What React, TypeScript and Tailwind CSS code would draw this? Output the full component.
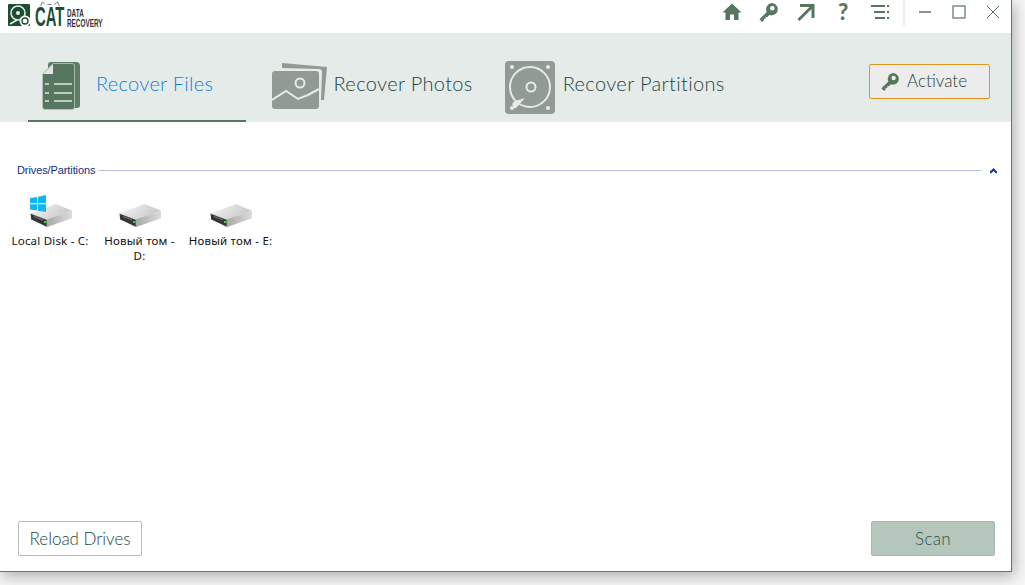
const G = "#57765f";

function Key({ className }: { className?: string }) {
  return (
    <svg viewBox="0 0 20 20" className={className} fill="#57765f">
      <path fillRule="evenodd" d="M12.6 1a6.200 6.200 0 0 1 0 12.400 6.200 6.200 0 0 1-2.200-.4L8.400 15H6.600v1.800H4.800v1.700L3.300 20 .5 17.200l7.300-7.300A6.200 6.200 0 0 1 12.600 1Zm.7 3a2.300 2.300 0 1 0 0 4.600 2.300 2.300 0 0 0 0-4.600Z" />
    </svg>
  );
}

function Drive({ win }: { win?: boolean }) {
  return (
    <svg viewBox="0 0 48 33" className="w-[48px] h-[33px] ml-[1px]">
      <defs>
        <linearGradient id="dtop" x1="0" y1="0" x2="1" y2="0.400">
          <stop offset="0" stopColor="#fafafa" />
          <stop offset="1" stopColor="#c8c8c8" />
        </linearGradient>
        <linearGradient id="dside" x1="0" y1="0" x2="1" y2="0">
          <stop offset="0" stopColor="#a8a8a8" />
          <stop offset="1" stopColor="#dcdcdc" />
        </linearGradient>
      </defs>
      <path d="M3.300 18.300 L29 9 L45 15.700 L19.700 24.300 Z" fill="url(#dtop)" />
      <path d="M19.700 24.300 L45 15.700 V23.300 L19.700 32.300 Z" fill="url(#dside)" />
      <path d="M3.300 18.300 L19.700 24.300 V32.300 L4 23.500 Z" fill="#a5a5a5" />
      <path d="M3.800 19 L19.700 25 V31.500 L4.200 24.500 Z" fill="#353535" />
      <path d="M7 21.500 L16 25" stroke="#8a8a8a" strokeWidth="0.800" />
      <rect x="17" y="26" width="2.500" height="2" fill="#32d24a" />
      {win && (
        <g fill="#12b5ee">
          <path d="M3 3 L10 2 V8.200 H3 Z" />
          <path d="M11 1.800 L19 0 V8.200 H11 Z" />
          <path d="M3 9.300 H10 V15.500 L3 14.500 Z" />
          <path d="M11 9.300 H19 V17 L11 15.700 Z" />
        </g>
      )}
    </svg>
  );
}

function DriveItem({ lines, win, w }: { lines: string[]; win?: boolean; w: string }) {
  return (
    <div className={`flex flex-col items-center ${w}`}>
      <Drive win={win} />
      <div className="font-['Noto_Sans',sans-serif] text-[11.5px] tracking-[0.2px] leading-[15px] text-center text-[#111] mt-[5px] whitespace-nowrap">
        {lines.map((l) => (
          <div key={l}>{l}</div>
        ))}
      </div>
    </div>
  );
}

export default function App() {
  return (
    <div className="w-[1025px] h-[585px] bg-[#f6f6f6] overflow-hidden font-['Lato',sans-serif]">
      <div className="w-[1012px] h-[572px] bg-white border-r border-b border-[#6f6f6f] flex flex-col shadow-[2px_4px_14px_rgba(0,0,0,0.3)]">
        <div className="h-[33px] flex justify-between shrink-0">
          <div className="flex items-start pl-[8px]">
            <svg viewBox="0 0 22 22" className="w-[22px] h-[22px] mt-[4px]">
              <rect width="22" height="22" rx="1" fill="#1d4d33" />
              <circle cx="10" cy="9" r="7" fill="none" stroke="#e8efe9" strokeWidth="1.500" />
              <circle cx="10" cy="9" r="2" fill="#e8efe9" />
              <path d="M2 20 L9 16" stroke="#e8efe9" strokeWidth="1.500" />
              <circle cx="17" cy="17" r="5.500" fill="#fff" />
              <circle cx="17" cy="17" r="3" fill="none" stroke="#1d4d33" strokeWidth="1.300" />
            </svg>
            <div className="relative w-[32px] ml-[5px] mt-[6px] h-[22px]">
              <svg viewBox="0 0 24 7" className="absolute left-[4px] top-[-5px] w-[22px] h-[6px]" fill="none" stroke="#444" strokeWidth="0.800">
                <path d="M1 6 L3 1 L6 4 M9 4 H14 M17 4 L21 1 L23 6" />
              </svg>
              <div className="font-['Liberation_Sans',sans-serif] font-bold text-[#1d4d33] text-[27px] leading-[22px] scale-x-[0.55] origin-left">CAT</div>
            </div>
            <div className="font-['Liberation_Sans',sans-serif] font-bold text-[#333] text-[11px] leading-[10px] scale-x-[0.58] origin-left mt-[8px] w-[38px]">
              <div>DATA</div>
              <div>RECOVERY</div>
            </div>
          </div>
          <div className="flex items-start h-full">
            <div className="flex items-center gap-[17px] pr-[13px] pb-[3px] border-r-2 border-[#efefef] h-[26px] mr-[-1px]">
              <svg viewBox="0 0 20 20" className="w-[20px] h-[20px]" fill={G}><path d="M10 1.500 L19.500 10.500 H16.500 V18 H12 V12.500 H8 V18 H3.500 V10.500 H.5 Z" /></svg>
              <Key className="w-[20px] h-[20px]" />
              <svg viewBox="0 0 20 20" className="w-[20px] h-[20px]" fill="none" stroke={G} strokeWidth="3"><path d="M2.500 18 L16.500 4 M4 3.500 H17 V16" /></svg>
              <div className="w-[20px] h-[26px] self-start text-center font-black text-[22px] leading-[24px] text-[#57765f]">?</div>
              <svg viewBox="0 0 20 20" className="w-[20px] h-[20px]" stroke={G} strokeWidth="2"><path d="M1 4 H15 M4 10 H15 M5 16 H15 M17 4 H19 M17 10 H19 M17 16 H19" /></svg>
            </div>
            <div className="flex items-center h-[24px] w-[107px] pl-[14px] gap-[20px]">
              <svg viewBox="0 0 14 14" className="w-[14px] h-[14px]" stroke={G} strokeWidth="1.500"><path d="M1 7 H13" /></svg>
              <svg viewBox="0 0 14 14" className="w-[14px] h-[14px]" stroke={G} strokeWidth="1.200" fill="none"><rect x="1" y="1" width="12" height="12" /></svg>
              <svg viewBox="0 0 14 14" className="w-[14px] h-[14px]" stroke={G} strokeWidth="1"><path d="M1 1 L13 13 M13 1 L1 13" /></svg>
            </div>
          </div>
        </div>

        <div className="h-[89px] bg-[#e5ebe9] flex items-center justify-between shrink-0 pl-[28px] pr-[21px]">
          <div className="flex items-center h-full">
            <div className="w-[218px] h-full border-b-2 border-[#57765f] flex items-center pl-[14px] pt-[12px] gap-[16px]">
              <svg viewBox="0 0 38 48" className="w-[38px] h-[48px] mt-[7px]">
                <path d="M6 3 a3 3 0 0 1 3-3 H34 a4 4 0 0 1 4 4 V43 a3 3 0 0 1-3 3 L6 46 Z" fill="#5e7c66" />
                <path d="M.5 12 L11 1.500 H30 a2.500 2.500 0 0 1 2.500 2.500 V45 a2.500 2.500 0 0 1-2.500 2.500 H3 a2.500 2.500 0 0 1-2.500-2.500 Z" fill="#57765f" stroke="#b9c8bd" strokeWidth="0.800" />
                <path d="M1 12 H11 V2 Z" fill="#dfe7e2" />
                <path d="M3 22 H7 M12 22 H30 M3 31 H7 M12 31 H30 M3 39 H7 M12 39 H30" stroke="#dfe7e2" strokeWidth="1.500" />
              </svg>
              <span className="text-[20px] font-light text-[#147fdc] tracking-[0.3px]">Recover Files</span>
            </div>
            <div className="flex items-center ml-[26px] gap-[6.5px] pt-[10px]">
              <svg viewBox="0 0 55 48" className="w-[55px] h-[48px] mt-[6px]">
                <path d="M10 1 L55 5 L52 38 L49 38 L50 10 Q50 7 47 7 L10 6 Z" fill="#929a94" />
                <rect x="0" y="9" width="47" height="38" rx="3" fill="#929a94" />
                <circle cx="28" cy="21" r="4.500" fill="none" stroke="#e5ebe9" strokeWidth="2" />
                <path d="M0 38 L14 29 L26 37 L36 33 L47 27" fill="none" stroke="#e5ebe9" strokeWidth="2" />
              </svg>
              <span className="text-[20px] font-light text-[#1d4444] tracking-[0.35px]">Recover Photos</span>
            </div>
            <div className="flex items-center ml-[32px] gap-[8px] pt-[10px]">
              <svg viewBox="0 0 50 53" className="w-[50px] h-[53px] mt-[10px]">
                <rect width="50" height="53" rx="4" fill="#929a94" />
                <circle cx="7" cy="6" r="2" fill="#e5ebe9" />
                <circle cx="43" cy="6" r="2" fill="#e5ebe9" />
                <circle cx="7" cy="47" r="2" fill="#e5ebe9" />
                <circle cx="43" cy="47" r="2" fill="#e5ebe9" />
                <circle cx="25" cy="26" r="20" fill="none" stroke="#e5ebe9" strokeWidth="2" />
                <circle cx="26" cy="26" r="4.500" fill="none" stroke="#e5ebe9" strokeWidth="2" />
                <path d="M8 46 Q6 42 10 40 L20 37 L11 47 Q9 48 8 46 Z" fill="#e5ebe9" />
              </svg>
              <span className="text-[20px] font-light text-[#1d4444] tracking-[0.35px]">Recover Partitions</span>
            </div>
          </div>
          <button className="w-[121px] h-[35px] mt-[8px] rounded-[2px] border border-[#e0991f] bg-[#ececec] flex items-center pl-[11px] gap-[7px] text-[17px] font-light text-[#1d4444]">
            <Key className="w-[19px] h-[19px]" />
            <span className="mb-[2px]">Activate</span>
          </button>
        </div>

        <div className="flex-1 flex flex-col min-h-0">
          <div className="flex items-center pl-[17px] pr-[13px] mt-[41px] h-[14px]">
            <span className="font-['Liberation_Sans',sans-serif] text-[11px] tracking-[-0.1px] text-[#14307a]">Drives/Partitions</span>
            <div className="flex-1 h-px bg-[#b4bfd6] ml-[4px] mr-[8px]" />
            <svg viewBox="0 0 10 8" className="w-[9px] h-[7px]" fill="#0a3a9e"><path d="M5 1 L9 5 V7 H7.500 L5 4.500 L2.500 7 H1 V5 Z" /></svg>
          </div>
          <div className="flex pl-[6px] mt-[18px]">
            <DriveItem lines={["Local Disk - C:"]} win w="w-[88px]" />
            <DriveItem lines={["Новый том -", "D:"]} w="w-[91px]" />
            <DriveItem lines={["Новый том - E:"]} w="w-[91px]" />
          </div>
          <div className="mt-auto flex items-center justify-between pl-[18px] pr-[16px] pb-[15px]">
            <button className="w-[124px] h-[35px] rounded-[2px] border border-[#b9bcbc] bg-white text-[17px] font-light text-[#1d4444]">Reload Drives</button>
            <button className="w-[124px] h-[35px] rounded-[2px] border border-[#a3bbae] bg-[#b5c7bd] text-[17px] font-light tracking-[0.3px] text-[#2a5050]">Scan</button>
          </div>
        </div>
      </div>
    </div>
  );
}
